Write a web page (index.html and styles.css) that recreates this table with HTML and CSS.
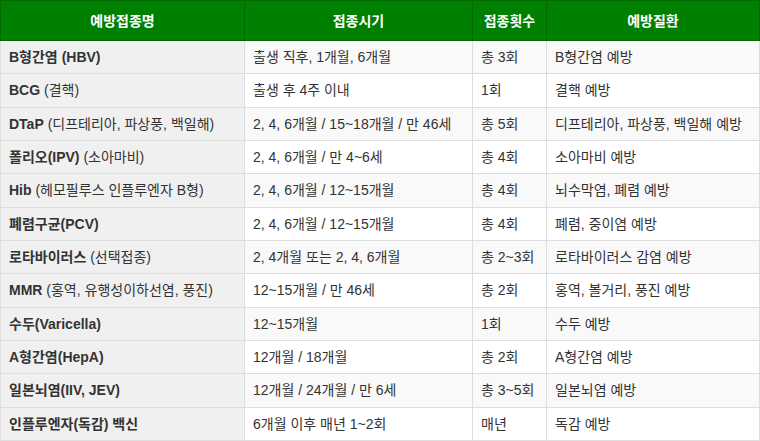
FILE: index.html
```html
<!DOCTYPE html>
<html lang="ko">
<head>
<meta charset="utf-8">
<title>예방접종표</title>
<link rel="stylesheet" href="styles.css">
</head>
<body>
<table class="vax">
  <colgroup>
    <col class="c1"><col class="c2"><col class="c3"><col class="c4">
  </colgroup>
  <thead>
    <tr><th>예방접종명</th><th>접종시기</th><th>접종횟수</th><th>예방질환</th></tr>
  </thead>
  <tbody>
    <tr><td class="name"><strong>B형간염 (HBV)</strong></td><td>출생 직후, 1개월, 6개월</td><td>총 3회</td><td>B형간염 예방</td></tr>
    <tr><td class="name"><strong>BCG</strong> (결핵)</td><td>출생 후 4주 이내</td><td>1회</td><td>결핵 예방</td></tr>
    <tr><td class="name"><strong>DTaP</strong> (디프테리아, 파상풍, 백일해)</td><td>2, 4, 6개월 / 15~18개월 / 만 46세</td><td>총 5회</td><td>디프테리아, 파상풍, 백일해 예방</td></tr>
    <tr><td class="name"><strong>폴리오(IPV)</strong> (소아마비)</td><td>2, 4, 6개월 / 만 4~6세</td><td>총 4회</td><td>소아마비 예방</td></tr>
    <tr><td class="name"><strong>Hib</strong> (헤모필루스 인플루엔자 B형)</td><td>2, 4, 6개월 / 12~15개월</td><td>총 4회</td><td>뇌수막염, 폐렴 예방</td></tr>
    <tr><td class="name"><strong>폐렴구균(PCV)</strong></td><td>2, 4, 6개월 / 12~15개월</td><td>총 4회</td><td>폐렴, 중이염 예방</td></tr>
    <tr><td class="name"><strong>로타바이러스</strong> (선택접종)</td><td>2, 4개월 또는 2, 4, 6개월</td><td>총 2~3회</td><td>로타바이러스 감염 예방</td></tr>
    <tr><td class="name"><strong>MMR</strong> (홍역, 유행성이하선염, 풍진)</td><td>12~15개월 / 만 46세</td><td>총 2회</td><td>홍역, 볼거리, 풍진 예방</td></tr>
    <tr><td class="name"><strong>수두(Varicella)</strong></td><td>12~15개월</td><td>1회</td><td>수두 예방</td></tr>
    <tr><td class="name"><strong>A형간염(HepA)</strong></td><td>12개월 / 18개월</td><td>총 2회</td><td>A형간염 예방</td></tr>
    <tr><td class="name"><strong>일본뇌염(IIV, JEV)</strong></td><td>12개월 / 24개월 / 만 6세</td><td>총 3~5회</td><td>일본뇌염 예방</td></tr>
    <tr><td class="name"><strong>인플루엔자(독감) 백신</strong></td><td>6개월 이후 매년 1~2회</td><td>매년</td><td>독감 예방</td></tr>
  </tbody>
</table>
</body>
</html>
```

FILE: styles.css
```css
html, body {
  margin: 0;
  padding: 0;
  background: #ffffff;
}

body {
  font-family: "Liberation Sans", Arial, "Noto Sans CJK KR", sans-serif;
  font-size: 14px;
  color: #333333;
}

.vax {
  border-collapse: collapse;
  table-layout: fixed;
  width: 759px;
}

.c1 { width: 244px; }
.c2 { width: 228px; }
.c3 { width: 74px; }
.c4 { width: 213px; }

.vax th {
  background: #008000;
  color: #ffffff;
  font-weight: bold;
  text-align: center;
  line-height: 20px;
  padding: 9.5px 8px;
  border: 1px solid #006a00;
}

.vax td {
  text-align: left;
  line-height: 20.33px;
  padding: 6px 8px;
  border: 1px solid #dddddd;
  white-space: nowrap;
  overflow: hidden;
}

.vax tbody tr:nth-child(odd) td {
  background: #f9f9f9;
}

.vax tbody tr:nth-child(even) td {
  background: #ffffff;
}

.vax tbody tr td.name {
  background: #f0f0f0;
}

.vax strong {
  font-weight: bold;
}
```
